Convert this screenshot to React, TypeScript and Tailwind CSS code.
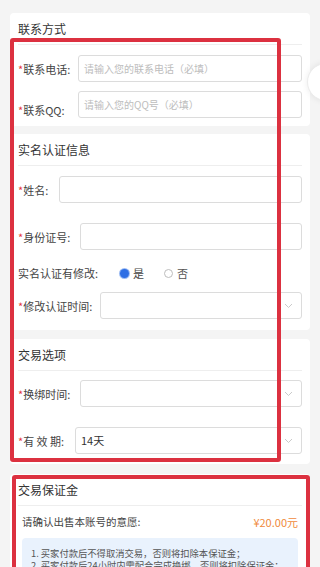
import type { ReactNode } from 'react'

const font = "font-['Noto_Sans_CJK_SC','Noto_Sans',sans-serif]"

function Card({ title, className = '', children }: { title: string; className?: string; children: ReactNode }) {
  return (
    <div className={`bg-white rounded-[4px] px-[8px] ${className}`}>
      <div className="pt-[8px] pb-[7px] text-[12px] leading-[16px] text-[#333] border-b border-[#eeeeee]">
        {title}
      </div>
      {children}
    </div>
  )
}

function Label({ text, width, required = true, className = '' }: { text: string; width: string; required?: boolean; className?: string }) {
  return (
    <div className={`shrink-0 text-[11px] leading-[14px] text-[#444] whitespace-nowrap ${width} ${className}`}>
      {required && <span className="text-[#e4393c]">*</span>}
      {text}
    </div>
  )
}

function Chevron() {
  return (
    <svg width="9" height="6" viewBox="0 0 9 6" className="absolute right-[8px] top-1/2 -translate-y-1/2">
      <polyline points="1,1 4.5,4.5 8,1" fill="none" stroke="#c4c4c4" strokeWidth="0.9" />
    </svg>
  )
}

function Field({ placeholder, value, select = false }: { placeholder?: string; value?: string; select?: boolean }) {
  return (
    <div className="relative flex-1 h-[27px] border border-[#dcdcdc] rounded-[3px] flex items-center px-[5px]">
      {value ? (
        <span className="text-[11px] text-[#333]">{value}</span>
      ) : (
        <span className="text-[10px] text-[#bdbdbd] whitespace-nowrap">{placeholder}</span>
      )}
      {select && <Chevron />}
    </div>
  )
}

export default function App() {
  return (
    <div className={`relative min-h-screen overflow-hidden bg-[#f4f4f4] px-[10px] pt-[13px] ${font}`}>
      {/* 联系方式 */}
      <Card title="联系方式" className="pb-[8px]">
        <div className="flex items-center mt-[10px]">
          <Label text="联系电话:" width="w-[60px]" />
          <Field placeholder="请输入您的联系电话（必填）" />
        </div>
        <div className="flex items-center mt-[9px]">
          <Label text="联系QQ:" width="w-[60px]" className="mt-[10px]" />
          <Field placeholder="请输入您的QQ号（必填）" />
        </div>
      </Card>

      {/* 实名认证信息 */}
      <Card title="实名认证信息" className="mt-[8px] pb-[11px]">
        <div className="flex items-center mt-[10px]">
          <Label text="姓名:" width="w-[41px]" />
          <Field />
        </div>
        <div className="flex items-center mt-[20px]">
          <Label text="身份证号:" width="w-[62px]" />
          <Field />
        </div>
        <div className="flex items-center h-[20px] mt-[13px]">
          <Label text="实名认证有修改:" width="w-[102px]" required={false} />
          <div className="flex items-center gap-[4px]">
            <span className="w-[9px] h-[9px] rounded-full bg-[#2f6fe4] ring-1 ring-[#9dbcf3]" />
            <span className="text-[11px] text-[#444]">是</span>
          </div>
          <div className="flex items-center gap-[4px] ml-[20px]">
            <span className="w-[9px] h-[9px] rounded-full border border-[#bdbdbd] bg-white" />
            <span className="text-[11px] text-[#555]">否</span>
          </div>
        </div>
        <div className="flex items-center mt-[9px]">
          <Label text="修改认证时间:" width="w-[82px]" />
          <Field select />
        </div>
      </Card>

      {/* 交易选项 */}
      <Card title="交易选项" className="mt-[9px] pb-[10px]">
        <div className="flex items-center mt-[9px]">
          <Label text="换绑时间:" width="w-[62px]" />
          <Field select />
        </div>
        <div className="flex items-center mt-[20px]">
          <Label text="有 效 期:" width="w-[57px]" />
          <Field select value="14天" />
        </div>
      </Card>

      {/* 交易保证金 */}
      <Card title="交易保证金" className="mt-[10px] pb-[12px]">
        <div className="flex items-center justify-between px-[4px] h-[32px]">
          <span className="text-[10.5px] text-[#444]">请确认出售本账号的意愿:</span>
          <span className="text-[11px] text-[#f08a3c]">¥20.00元</span>
        </div>
        <div className="mx-[4px] rounded-[4px] bg-[#e9f2fd] px-[9px] pt-[9px] pb-[8px] text-[9.3px] leading-[12px] text-[#555] whitespace-nowrap">
          <p>1. 买家付款后不得取消交易，否则将扣除本保证金；</p>
          <p>2. 买家付款后24小时内需配合完成换绑，否则将扣除保证金；</p>
        </div>
      </Card>

      {/* annotation frames */}
      <div className="absolute left-[10px] top-[38px] w-[271px] h-[424px] border-[4px] border-[#dc3140] rounded-[3px] pointer-events-none" />
      <div className="absolute left-[12px] top-[475px] w-[298px] h-[140px] border-[4px] border-[#dc3140] rounded-[3px] pointer-events-none" />

      {/* floating side button */}
      <div className="absolute left-[307px] top-[63px] w-[38px] h-[38px] rounded-full bg-white border border-[#ececec] shadow-[0_0_6px_rgba(0,0,0,0.08)]" />
    </div>
  )
}
